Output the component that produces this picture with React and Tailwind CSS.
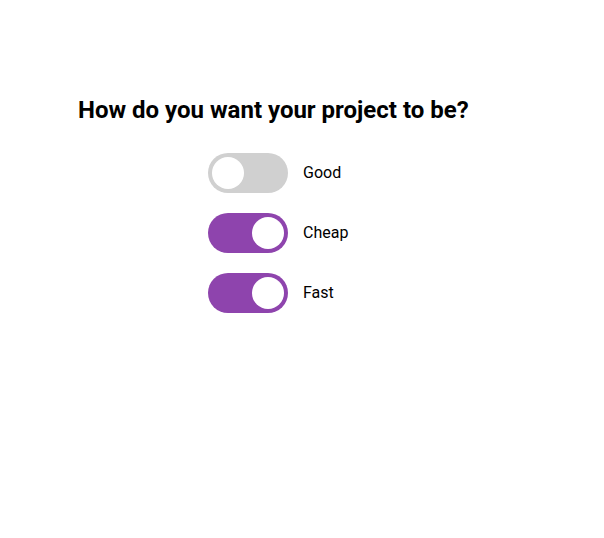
import React, { useState } from "react";

function Toggle({ label, on, onChange }) {
  return (
    <label className="flex items-center gap-[15px] cursor-pointer">
      <button
        type="button"
        onClick={onChange}
        className={`w-20 h-10 rounded-full p-1 flex ${on ? "bg-[#8e44ad] justify-end" : "bg-[#d0d0d0] justify-start"}`}
      >
        <span className="block w-8 h-8 rounded-full bg-white" />
      </button>
      <span className="text-base text-black">{label}</span>
    </label>
  );
}

export default function App() {
  const [state, setState] = useState({ Good: false, Cheap: true, Fast: true });
  return (
    <div className="w-[604px] h-[538px] bg-white" style={{ fontFamily: "Roboto, sans-serif" }}>
      <div className="pt-[94px] pl-[78px]">
        <h1 className="text-[24px] font-bold text-black leading-[32px]">How do you want your project to be?</h1>
        <div className="mt-[27px] ml-[130px] flex flex-col gap-5">
          {["Good", "Cheap", "Fast"].map((k) => (
            <Toggle key={k} label={k} on={state[k]} onChange={() => setState({ ...state, [k]: !state[k] })} />
          ))}
        </div>
      </div>
    </div>
  );
}
